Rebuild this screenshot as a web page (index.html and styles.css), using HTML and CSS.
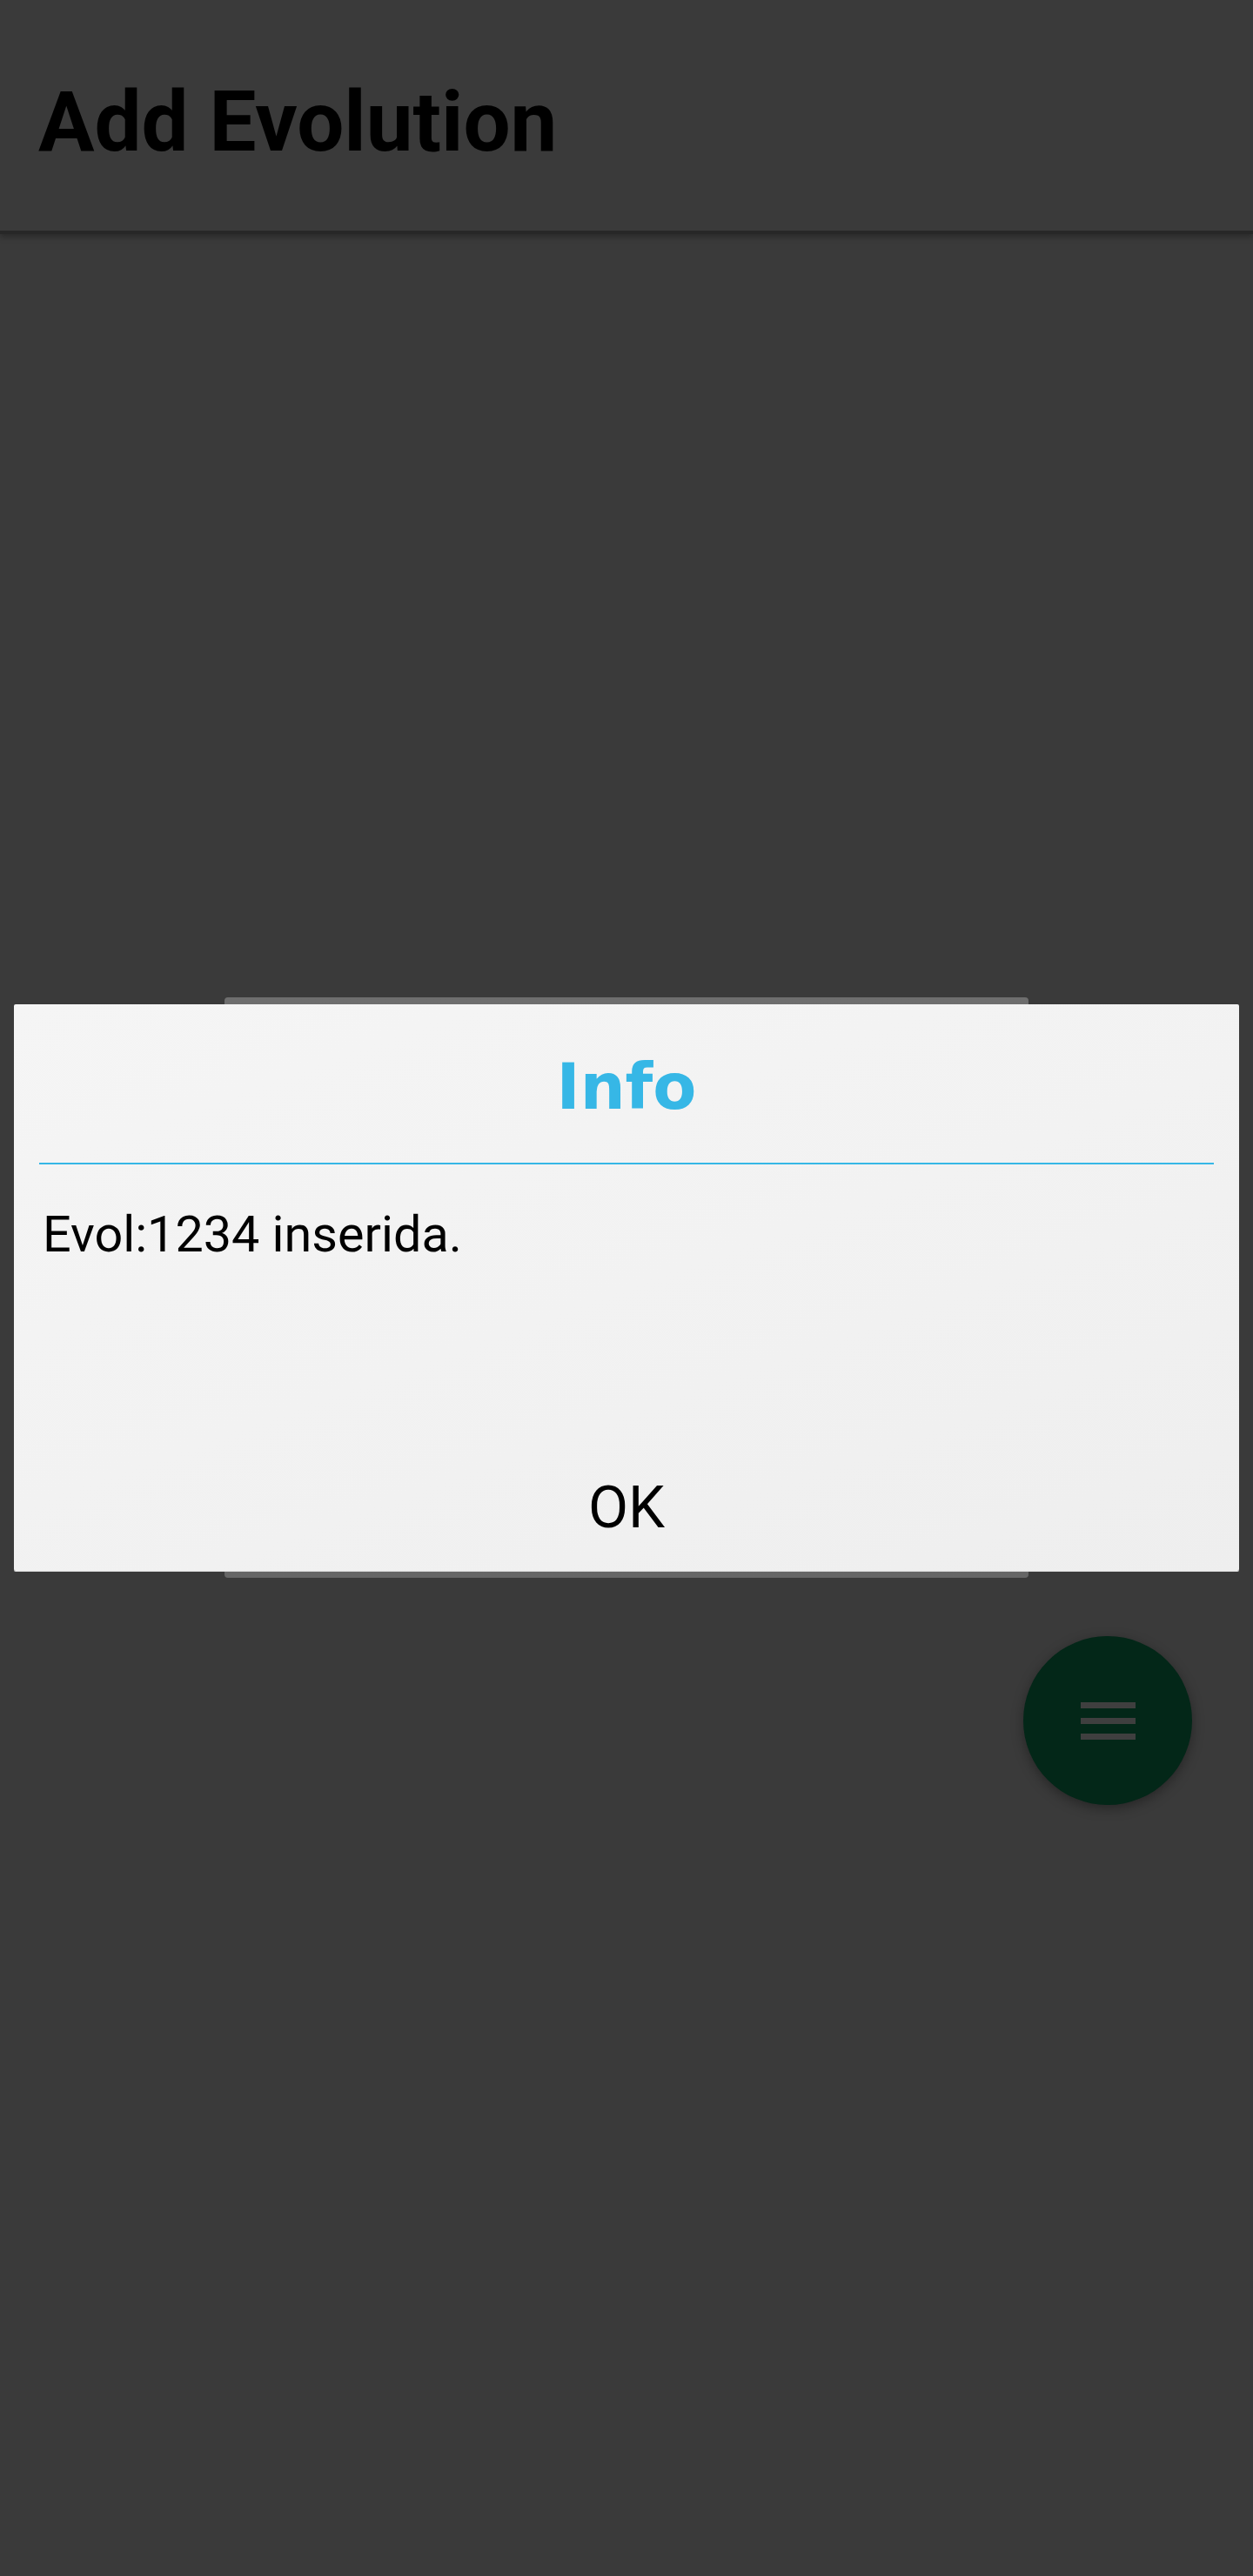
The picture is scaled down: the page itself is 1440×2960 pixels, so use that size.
FILE: index.html
```html
<!DOCTYPE html>
<html lang="en">
<head>
<meta charset="utf-8">
<title>Add Evolution</title>
<link rel="stylesheet" href="styles.css">
</head>
<body>
<div class="screen">
  <header class="appbar">
    <h1 class="appbar-title">Add Evolution</h1>
  </header>
  <main class="content">
    <div class="card"></div>
    <button class="fab" type="button" aria-label="Menu">
      <svg width="63" height="43" viewBox="0 0 63 43" aria-hidden="true">
        <rect x="0" y="0" width="63" height="7" fill="#3f3f3f"/>
        <rect x="0" y="18" width="63" height="7" fill="#3f3f3f"/>
        <rect x="0" y="36" width="63" height="7" fill="#3f3f3f"/>
      </svg>
    </button>
  </main>
  <div class="dialog" role="dialog">
    <h2 class="dialog-title">Info</h2>
    <div class="dialog-divider"></div>
    <p class="dialog-message">Evol:1234 inserida.</p>
    <button class="dialog-button" type="button">OK</button>
  </div>
</div>
</body>
</html>
```

FILE: styles.css
```css
html, body {
  margin: 0;
  padding: 0;
}

body {
  background: #3a3a3a;
  font-family: Roboto, "Liberation Sans", sans-serif;
}

.screen {
  position: relative;
  min-height: 2960px;
  display: flex;
  flex-direction: column;
}

.appbar {
  box-sizing: border-box;
  height: 265px;
  padding: 92px 0 0 44px;
  background: #3a3a3a;
  box-shadow: 0 4px 0 #272727, 0 8px 6px rgba(0, 0, 0, 0.25);
  position: relative;
  z-index: 1;
}

.appbar-title {
  margin: 0;
  font-family: Roboto, "Liberation Sans", sans-serif;
  font-weight: 700;
  font-size: 96px;
  line-height: 96px;
  color: #000;
}

.content {
  display: flex;
  flex-direction: column;
  padding-top: 881px;
}

.card {
  align-self: center;
  width: 924px;
  height: 667px;
  background: linear-gradient(180deg, #6e6e6e, #666666);
  border-radius: 4px;
}

.fab {
  align-self: flex-end;
  margin: 67px 70px 0 0;
  width: 194px;
  height: 194px;
  border: none;
  padding: 0;
  border-radius: 50%;
  background: #032718;
  box-shadow: 0 4px 14px rgba(0, 0, 0, 0.35);
  display: flex;
  align-items: center;
  justify-content: center;
}

.fab svg {
  display: block;
}

.dialog {
  position: absolute;
  top: 1154px;
  left: 16px;
  width: 1408px;
  height: 651px;
  box-sizing: border-box;
  padding: 58px 0 39px;
  display: flex;
  flex-direction: column;
  background: linear-gradient(160deg, #f5f5f5 0%, #f2f2f2 50%, #eeeeee 100%);
  border-radius: 2px;
  box-shadow: 0 1px 0 #dadada;
  z-index: 2;
}

.dialog-title {
  margin: 0;
  text-align: center;
  font-family: "DejaVu Sans", sans-serif;
  font-weight: 700;
  font-size: 73px;
  line-height: 73px;
  color: #36b7e6;
}

.dialog-divider {
  height: 2px;
  margin: 51px 29px 0;
  background: #36b7e6;
}

.dialog-message {
  margin: 52px 0 0 33px;
  font-family: Roboto, "Liberation Sans", sans-serif;
  font-size: 57.5px;
  line-height: 58px;
  color: #000;
}

.dialog-button {
  margin-top: auto;
  align-self: center;
  padding: 0;
  border: none;
  background: transparent;
  font-family: Roboto, "Liberation Sans", sans-serif;
  font-size: 67px;
  line-height: 67px;
  color: #000;
}
```
